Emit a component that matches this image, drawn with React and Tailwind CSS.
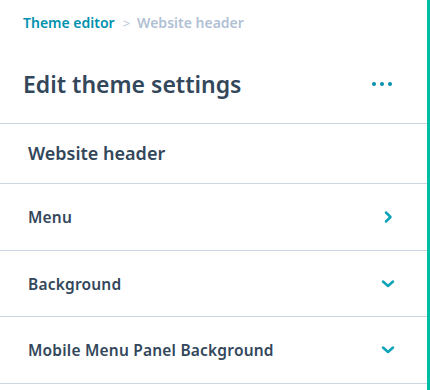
import React from "react";

function ChevronRight() {
  return (
    <svg width="14" height="14" viewBox="0 0 14 14" fill="none">
      <path d="M5 2.5 L9.5 7 L5 11.5" stroke="#0fa3b8" strokeWidth="2.5" strokeLinecap="round" strokeLinejoin="round" />
    </svg>
  );
}

function ChevronDown() {
  return (
    <svg width="14" height="14" viewBox="0 0 14 14" fill="none">
      <path d="M2 4.5 L7 9 L12 4.5" stroke="#0fa3b8" strokeWidth="2.5" strokeLinecap="round" strokeLinejoin="round" />
    </svg>
  );
}

export default function App() {
  const rows = [
    { label: "Menu", icon: "right", h: "h-[67px]" },
    { label: "Background", icon: "down", h: "h-[66px]" },
    { label: "Mobile Menu Panel Background", icon: "down", h: "h-[67px]" },
  ];
  return (
    <div
      className="w-[430px] h-[390px] bg-white border-r-[3px] border-[#00bda5] overflow-hidden"
      style={{ fontFamily: '"Noto Sans", "Open Sans", sans-serif' }}
    >
      <div className="h-[123px] flex flex-col">
        <div className="pl-[23px] pt-[13px] flex items-center text-[14px] font-semibold leading-[20px]">
          <span className="text-[#0091ae]">Theme editor</span>
          <span className="text-[#b8c7d6] ml-[8px] mr-[7px] text-[13px] font-normal">&gt;</span>
          <span className="text-[#b0c1d4]">Website header</span>
        </div>
        <div className="pl-[23px] pr-[35px] mt-[37px] flex items-center justify-between">
          <h1 className="text-[23px] font-semibold text-[#33475b] leading-[28px]">Edit theme settings</h1>
          <div className="flex gap-[4px]">
            <span className="w-[4px] h-[4px] rounded-full bg-[#0091ae]" />
            <span className="w-[4px] h-[4px] rounded-full bg-[#0091ae]" />
            <span className="w-[4px] h-[4px] rounded-full bg-[#0091ae]" />
          </div>
        </div>
      </div>
      <div className="border-t border-[#cbd6e2] h-[60px] flex items-center pl-[28px]">
        <span className="text-[18px] font-semibold text-[#33475b] pb-[1px]">Website header</span>
      </div>
      {rows.map((r) => (
        <div
          key={r.label}
          className={`border-t border-[#cbd6e2] ${r.h} flex items-center justify-between pl-[28px] pr-[32px]`}
        >
          <span className="text-[15.5px] tracking-[0.2px] font-semibold text-[#33475b] pt-[2px]">{r.label}</span>
          {r.icon === "right" ? <ChevronRight /> : <ChevronDown />}
        </div>
      ))}
      <div className="border-t border-[#cbd6e2]" />
    </div>
  );
}
